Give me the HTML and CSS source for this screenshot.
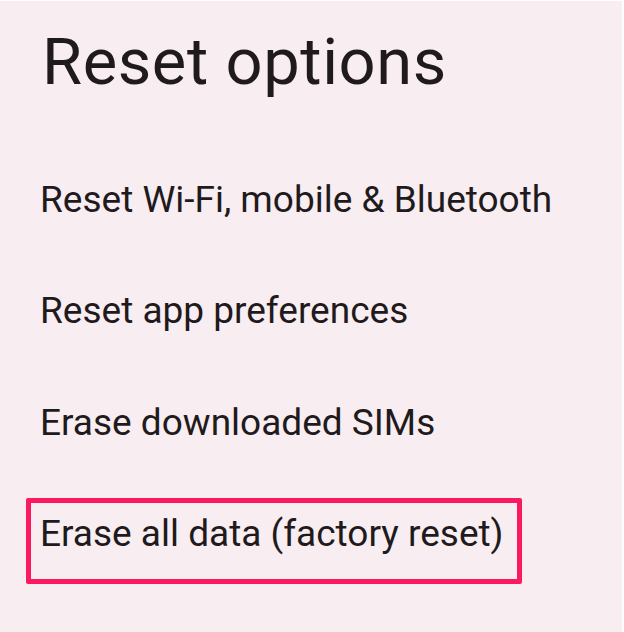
FILE: index.html
```html
<!DOCTYPE html>
<html>
<head>
<meta charset="utf-8">
<link rel="stylesheet" href="styles.css">
</head>
<body>
<div class="screen">
  <h1 class="title">Reset options</h1>
  <ul class="options">
    <li class="option">Reset Wi-Fi, mobile &amp; Bluetooth</li>
    <li class="option">Reset app preferences</li>
    <li class="option">Erase downloaded SIMs</li>
    <li class="option option--highlight">Erase all data (factory reset)</li>
  </ul>
</div>
</body>
</html>
```
FILE: styles.css
```css
html, body {
  margin: 0;
  padding: 0;
  background: #ffffff;
}
.screen {
  width: 622px;
  height: 631px;
  margin-top: 1px;
  background: #f8edf1;
  font-family: Roboto, "Noto Sans", sans-serif;
  color: #1f1a1c;
  overflow: hidden;
}
.title {
  margin: 0;
  padding: 22px 0 0 42px;
  font-size: 65px;
  line-height: 78px;
  font-weight: 400;
  letter-spacing: 0.6px;
}
.options {
  list-style: none;
  margin: 63px 0 0 26px;
  padding: 0;
  display: flex;
  flex-direction: column;
  gap: 25.3px;
}
.option {
  box-sizing: border-box;
  height: 86px;
  border: 5px solid transparent;
  padding: 9px 0 0 9px;
  font-size: 37px;
  line-height: 44px;
  white-space: nowrap;
}
.option--highlight {
  width: 496px;
  border-color: #fb1a5f;
  border-radius: 2px;
}
```
